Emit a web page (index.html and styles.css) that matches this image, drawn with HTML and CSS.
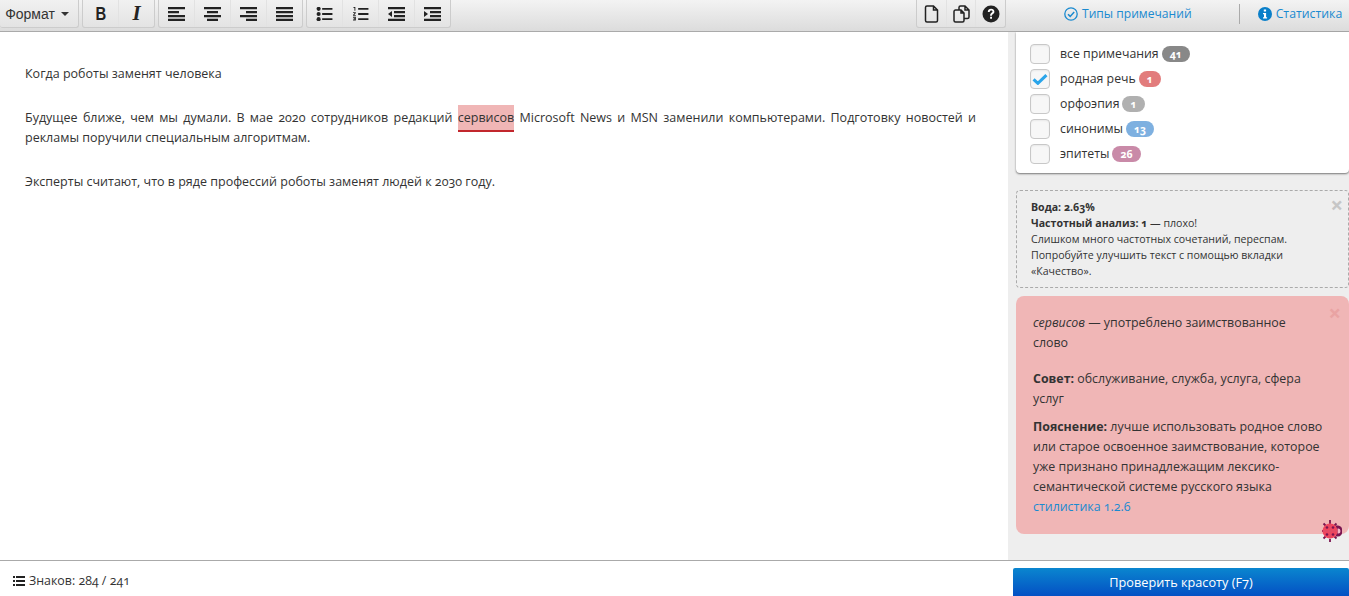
FILE: index.html
```html
<!DOCTYPE html>
<html lang="ru">
<head>
<meta charset="utf-8">
<title>Редактор</title>
<link rel="stylesheet" href="styles.css">
</head>
<body>
<div class="app">
  <header class="toolbar">
    <div class="tools">
      <div class="group g-format"><button class="btn btn-format">Формат<span class="caret"></span></button></div>
      <div class="group g-two">
        <button class="btn"><span class="glyph-b">B</span></button>
        <button class="btn btn-i">I</button>
      </div>
      <div class="group g-four">
        <button class="btn"><svg class="ico" viewBox="0 0 17 14"><path d="M0 0h17v2.300H0zM0 4h11v2.300H0zM0 8h17v2.300H0zM0 11.700h17V14H0z"/></svg></button>
        <button class="btn"><svg class="ico" viewBox="0 0 17 14"><path d="M0 0h17v2.300H0zM3 4h11v2.300H3zM0 8h17v2.300H0zM3 11.700h11V14H3z"/></svg></button>
        <button class="btn"><svg class="ico" viewBox="0 0 17 14"><path d="M0 0h17v2.300H0zM6 4h11v2.300H6zM0 8h17v2.300H0zM6 11.700h11V14H6z"/></svg></button>
        <button class="btn"><svg class="ico" viewBox="0 0 17 14"><path d="M0 0h17v2.300H0zM0 4h17v2.300H0zM0 8h17v2.300H0zM0 11.700h17V14H0z"/></svg></button>
      </div>
      <div class="group g-four">
        <button class="btn"><svg class="ico" viewBox="0 0 17 15"><circle cx="2.200" cy="2" r="2.200"/><circle cx="2.200" cy="7.500" r="2.200"/><circle cx="2.200" cy="13" r="2.200"/><path d="M6 1h11v2H6zM6 6.500h11v2H6zM6 12h11v2H6z"/></svg></button>
        <button class="btn"><svg class="ico" viewBox="0 0 17 15"><path d="M1 0h2v4H2V1H1zM0.500 5.500h3v1L1.800 8.500h1.700v1h-3v-1l1.700-2H0.500zM0.500 10.500h3v4h-3v-1h2v-.5H1.200v-1h1.300v-.5h-2z"/><path d="M6 1h11v2H6zM6 6.500h11v2H6zM6 12h11v2H6z"/></svg></button>
        <button class="btn"><svg class="ico" viewBox="0 0 17 14"><path d="M0 0h17v2.300H0zM6 4h11v2.300H6zM6 8h11v2.300H6zM0 11.700h17V14H0zM4 4v6L0 7z"/></svg></button>
        <button class="btn"><svg class="ico" viewBox="0 0 17 14"><path d="M0 0h17v2.300H0zM6 4h11v2.300H6zM6 8h11v2.300H6zM0 11.700h17V14H0zM0 4v6l4-3z"/></svg></button>
      </div>
    </div>
    <div class="group group-file">
      <button class="btn"><svg class="ico-file" viewBox="0 0 14 18"><path d="M2.500 1H9l4 4v10.500a1.500 1.500 0 0 1-1.500 1.500h-9A1.500 1.500 0 0 1 1 15.500v-13A1.500 1.500 0 0 1 2.500 1zM9 1v4h4" fill="none" stroke="#222" stroke-width="1.500"/></svg></button>
      <button class="btn"><svg class="ico-file" viewBox="0 0 17 18"><path d="M6 4.500V2.500A1.500 1.500 0 0 1 7.500 1H12l4 4v7a1.500 1.500 0 0 1-1.500 1.500H11M12 1v4h4M2.500 5H8l3 3v7.500a1.500 1.500 0 0 1-1.500 1.500h-7A1.500 1.500 0 0 1 1 15.500v-9A1.500 1.500 0 0 1 2.500 5zM8 5v3h3" fill="none" stroke="#222" stroke-width="1.500"/></svg></button>
      <button class="btn"><svg class="ico-help" viewBox="0 0 18 18"><circle cx="9" cy="9" r="8.500" fill="#222"/><path d="M5.800 7c0-2 1.500-3.200 3.300-3.200S12.400 5 12.400 6.700c0 2.300-2.500 2.300-2.500 4H8.100c0-2.800 2.400-2.900 2.400-4.100 0-.7-.6-1.100-1.300-1.100-.8 0-1.400.5-1.500 1.500zM8.100 11.700h1.900v2H8.100z" fill="#fff"/></svg></button>
    </div>
    <nav class="tabs">
      <a class="tab tab-types"><svg class="tab-ico" viewBox="0 0 14 14"><circle cx="7" cy="7" r="6.200" fill="none" stroke="#1a8ad0" stroke-width="1.300"/><path d="M4 7.200l2.200 2.200L10.200 5" fill="none" stroke="#1a8ad0" stroke-width="1.500"/></svg>Типы примечаний</a>
      <span class="tab-sep"></span>
      <a class="tab tab-stats"><svg class="tab-ico" viewBox="0 0 14 14"><circle cx="7" cy="7" r="7" fill="#0a7fc9"/><path d="M5.800 2.500h2.300v2H5.800zM5 6h3.100v4.200h1v1.300H5v-1.300h1V7.300H5z" fill="#fff"/></svg>Статистика</a>
    </nav>
  </header>

  <main class="main">
    <section class="editor">
      <p>Когда роботы заменят человека</p>
      <p>Будущее ближе, чем мы думали. В мае 2020 сотрудников редакций <span class="mark">сервисов</span> Microsoft News и MSN заменили компьютерами. Подготовку новостей и рекламы поручили специальным алгоритмам.</p>
      <p>Эксперты считают, что в ряде профессий роботы заменят людей к 2030 году.</p>
    </section>
    <aside class="side">
      <ul class="filters">
        <li class="filter"><span class="check"></span>все примечания<span class="badge b-all">41</span></li>
        <li class="filter"><span class="check"><svg class="tick" viewBox="0 0 18 14"><path d="M1.500 7.500l5 4.500L16.500 2.500" fill="none" stroke="#2aa5ea" stroke-width="3.600"/></svg></span>родная речь<span class="badge b-native">1</span></li>
        <li class="filter"><span class="check"></span>орфоэпия<span class="badge b-orth">1</span></li>
        <li class="filter"><span class="check"></span>синонимы<span class="badge b-syn">13</span></li>
        <li class="filter"><span class="check"></span>эпитеты<span class="badge b-epi">26</span></li>
      </ul>
      <div class="note-info">
        <span class="close close-grey">×</span>
        <b>Вода: 2.63%</b><br>
        <b>Частотный анализ: 1</b> — плохо!<br>
        Слишком много частотных сочетаний, переспам.<br>
        Попробуйте улучшить текст с помощью вкладки «Качество».
      </div>
      <div class="note-red">
        <span class="close close-red">×</span>
        <p class="nr-head"><i>сервисов</i> — употреблено заимствованное<br>слово</p>
        <p class="nr-advice"><b>Совет:</b> обслуживание, служба, услуга, сфера услуг</p>
        <p><b>Пояснение:</b> лучше использовать родное слово или старое освоенное заимствование, которое уже признано принадлежащим лексико-семантической системе русского языка<br><a class="link">стилистика 1.2.6</a></p>
        <svg class="bug" viewBox="0 0 20 22">
          <path d="M8 0v4M1.500 3.500l3 3M14.500 3.500l-3 3M0 11h2M1.500 18.500l3-3M8 22v-3M14.500 18.500l-3-3" stroke="#7a1450" stroke-width="1.800" fill="none"/>
          <path d="M14 5.500h2a4.500 5.500 0 0 1 0 11h-2z" fill="#7a1450"/>
          <path d="M15.500 8.500h1a2 2.500 0 0 1 0 5h-1z" fill="#f5b5c5"/>
          <circle cx="8" cy="11" r="7.500" fill="#f0455e"/>
          <path d="M.5 10.500h15v1H.5zM7.500 3.500h1v15h-1z" fill="#d9506a"/>
          <g fill="#7a1450"><circle cx="5" cy="7.500" r="1.300"/><circle cx="11" cy="7.500" r="1.300"/><circle cx="5" cy="14.500" r="1.300"/><circle cx="11" cy="14.500" r="1.300"/></g>
        </svg>
      </div>
    </aside>
  </main>

  <footer class="footer">
    <div class="count"><svg class="count-ico" viewBox="0 0 12 10"><path d="M0 0h2v2H0zM3 0h9v2H3zM0 4h2v2H0zM3 4h9v2H3zM0 8h2v2H0zM3 8h9v2H3z"/></svg>Знаков: 284 / 241</div>
    <button class="check-btn">Проверить красоту (F7)</button>
  </footer>
</div>
</body>
</html>
```
FILE: styles.css
```css
* { box-sizing: border-box; }
html, body { margin: 0; height: 100%; overflow: hidden; }
body {
  font-family: "Open Sans", "Noto Sans", sans-serif;
  font-size: 12.500px;
  font-variant-numeric: oldstyle-nums;
  color: #333;
  background: #fff;
}
.app { display: flex; flex-direction: column; height: 596px; }

.toolbar {
  height: 32px;
  flex: none;
  display: flex;
  background: linear-gradient(#f3f3f3, #dcdcdc);
  border-bottom: 1px solid #aaa;
}
.tools { display: flex; gap: 3px; width: 916px; flex: none; }
.group {
  display: flex;
  height: 28px;
  border: 1px solid #ccc;
  border-top: 0;
  border-radius: 0 0 3px 3px;
  background: linear-gradient(#f1f1f1, #e3e3e3);
}
.g-format { width: 79px; border-left: 0; }
.g-two { width: 73px; }
.g-four { width: 145px; }
.group-file { width: 90px; flex: none; }
.btn {
  flex: 1;
  min-width: 0;
  padding: 0;
  border: 0;
  border-left: 1px solid #e2e2e2;
  background: none;
  display: flex;
  align-items: center;
  justify-content: center;
  color: #222;
}
.btn:first-child { border-left: 0; }
.btn-format {
  font: 14px "Liberation Sans", sans-serif;
  color: #333;
  gap: 6px;
  padding-right: 4px;
}
.caret {
  border-top: 4px solid #333;
  border-left: 4px solid transparent;
  border-right: 4px solid transparent;
}
.glyph-b {
  display: block;
  font: bold 19px "Liberation Sans", sans-serif;
  transform: scaleX(.78);
}
.btn-i { font: italic bold 21px "Liberation Serif", serif; }
.ico { width: 17px; height: 14px; fill: #222; }
.ico-file { height: 18px; width: 17px; }
.ico-help { height: 18px; width: 18px; }

.tabs { flex: 1; display: flex; align-items: flex-start; padding-top: 4px; }
.tab {
  display: flex;
  align-items: center;
  gap: 4px;
  height: 19px;
  white-space: nowrap;
  color: #1a8ad0;
}
.tab-ico { width: 14px; height: 14px; flex: none; }
.tab-types { margin-left: 58px; font-size: 12.100px; }
.tab-sep { width: 1px; height: 20px; background: #aaa; margin-left: 47px; flex: none; }
.tab-stats { margin-left: 18px; font-size: 12.300px; }

.main { flex: 1; display: flex; min-height: 0; }
.editor { flex: 1; padding: 32px 32px 0 25px; min-width: 0; }
.editor p { margin: 0 0 24px; line-height: 20px; text-align: justify; }
.mark {
  padding: 4px 0 4px;
  background: #f0b6b6;
  border-bottom: 2px solid #c2272d;
}
.side {
  width: 341px;
  flex: none;
  background: #eee;
  padding-left: 8px;
}
.filters {
  list-style: none;
  margin: 0 0 17px;
  padding: 9px 0 7px 14px;
  height: 141px;
  background: #fff;
  border-radius: 0 0 4px 4px;
  box-shadow: 0 1px 2px rgba(0, 0, 0, .5);
}
.filter {
  display: flex;
  align-items: center;
  height: 25px;
  font-size: 12.300px;
}
.check {
  width: 20px;
  height: 20px;
  margin-right: 10px;
  border: 1px solid #c8c8c8;
  border-radius: 4px;
  background: #f7f7f7;
  box-shadow: inset 0 1px 2px rgba(0, 0, 0, .06);
  display: flex;
  align-items: center;
  justify-content: center;
}
.tick { width: 16px; height: 12px; }
.badge {
  margin-left: 3px;
  height: 16px;
  padding: 0 8px;
  border-radius: 8px;
  font-size: 10.500px;
  font-weight: 700;
  line-height: 16px;
  color: #fff;
}
.b-all { background: #888; }
.b-native { background: #e27c7c; }
.b-orth { background: #b0b0b0; }
.b-syn { background: #7eb0e0; }
.b-epi { background: #c98aa8; }

.note-info {
  position: relative;
  height: 98px;
  margin-bottom: 8px;
  padding: 8px 14px;
  font-size: 10.600px;
  line-height: 16px;
  border: 1px dashed #aaa;
  border-radius: 4px;
}
.note-red {
  position: relative;
  height: 238px;
  padding: 17px 17px 0;
  background: #f0b6b6;
  border-radius: 8px;
  line-height: 20px;
  font-size: 12.400px;
}
.note-red p { margin: 0; }
.note-red .nr-head { margin-bottom: 16px; }
.note-red .nr-advice { margin-bottom: 8px; }
.link { color: #1a8ad0; }
.close {
  position: absolute;
  right: 5px;
  top: 1px;
  font-size: 22px;
  font-weight: 700;
  line-height: 24px;
}
.close-grey { color: #c6c6c6; }
.close-red { color: #e9a3a3; top: 4px; right: 8px; }
.bug { position: absolute; right: 7px; bottom: -8px; width: 20px; height: 22px; }

.footer {
  height: 36px;
  flex: none;
  display: flex;
  align-items: flex-end;
  justify-content: space-between;
  border-top: 1px solid #aaa;
}
.count {
  height: 31px;
  padding-left: 13px;
  display: flex;
  align-items: center;
  gap: 4px;
  font-size: 12.400px;
}
.count-ico { width: 12px; height: 10px; fill: #222; }
.check-btn {
  width: 336px;
  height: 28px;
  border: 0;
  border-radius: 2px 2px 0 0;
  background: linear-gradient(#0a86cf, #0450c4);
  color: #fff;
  font: 12.700px "Open Sans", sans-serif;
  font-variant-numeric: oldstyle-nums;
}
```
